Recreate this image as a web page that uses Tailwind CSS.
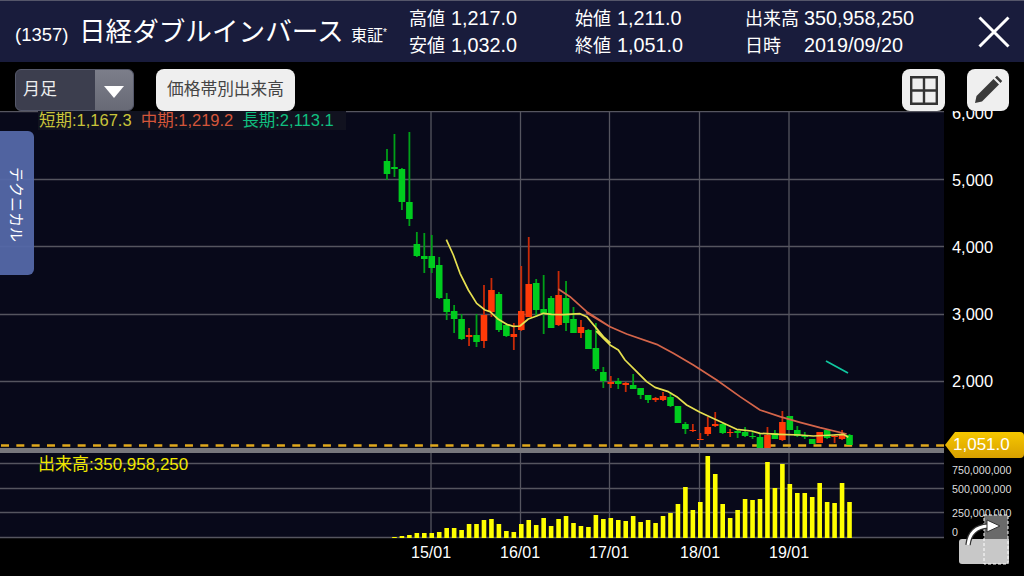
<!DOCTYPE html>
<html lang="ja">
<head>
  <meta charset="UTF-8" />
  <title>1357 chart</title>
  <script src="https://cdn.jsdelivr.net/npm/@tailwindcss/browser@4"></script>
</head>
<body class="w-[1024px] h-[576px] overflow-hidden bg-black text-white font-['Liberation_Sans','Noto_Sans_CJK_JP',sans-serif]">

  <!-- Header -->
  <header class="h-[62px] bg-[#191c3c] border-t border-[#55566a] flex items-center relative">
    <div class="w-[409px] flex items-baseline pl-[15px] pt-[2px] shrink-0">
      <span class="text-[18.5px] w-[64px] shrink-0">(1357)</span>
      <span class="text-[26.6px] w-[272px] shrink-0 whitespace-nowrap">日経ダブルインバース</span>
      <span class="text-[16px] whitespace-nowrap">東証<sup class="text-[10px]">*</sup></span>
    </div>
    <div class="w-[166px] shrink-0 text-[18px] leading-[26px] mt-[1px]">
      <div class="flex items-baseline gap-[6px]"><span>高値</span><span class="text-[19.8px]">1,217.0</span></div>
      <div class="flex items-baseline gap-[6px]"><span>安値</span><span class="text-[19.8px]">1,032.0</span></div>
    </div>
    <div class="w-[170px] shrink-0 text-[18px] leading-[26px] mt-[1px]">
      <div class="flex items-baseline gap-[6px]"><span>始値</span><span class="text-[19.8px]">1,211.0</span></div>
      <div class="flex items-baseline gap-[6px]"><span>終値</span><span class="text-[19.8px]">1,051.0</span></div>
    </div>
    <div class="w-[233px] shrink-0 text-[18px] leading-[26px] mt-[1px]">
      <div class="flex items-baseline"><span class="w-[59px]">出来高</span><span class="text-[19.8px]">350,958,250</span></div>
      <div class="flex items-baseline"><span class="w-[59px]">日時</span><span class="text-[19.8px]">2019/09/20</span></div>
    </div>
    <svg width="32" height="32" viewBox="0 0 32 32" class="shrink-0"><path d="M1.500 1.500L30.500 30.500M30.500 1.500L1.500 30.500" stroke="#fff" stroke-width="3" fill="none"/></svg>
  </header>

  <!-- Toolbar -->
  <div class="h-[49px] flex items-start pt-[7px] pl-[15px]">
    <div class="w-[119px] h-[42px] flex rounded-md border border-[#55586a] overflow-hidden bg-[#3c3e4e]">
      <span class="flex-1 pl-[7px] text-[17px] leading-[40px] text-[#eeeeee]">月足</span>
      <span class="w-[38px] flex items-center justify-center bg-gradient-to-b from-[#7c7e8a] to-[#686a76]">
        <svg width="20" height="12" viewBox="0 0 20 12" class="mt-[3px]"><path d="M0 0H20L10 12Z" fill="#fff"/></svg>
      </span>
    </div>
    <button class="ml-[22px] w-[139px] h-[42px] rounded-lg bg-[#efefef] text-[#444] text-[16.7px] whitespace-nowrap">価格帯別出来高</button>
    <button class="ml-[607px] w-[43px] h-[42px] rounded-lg bg-[#efefef] flex items-center justify-center">
      <svg width="28" height="29" viewBox="0 0 28 29"><path d="M1.200 1.200H26.800V27.800H1.200ZM14 1.200V27.800M1.200 14.500H26.800" fill="none" stroke="#333" stroke-width="2.400"/></svg>
    </button>
    <button class="ml-[22px] w-[42px] h-[42px] rounded-lg bg-[#efefef] flex items-center justify-center">
      <svg width="30" height="30" viewBox="0 0 30 30"><path d="M2 28L3.500 21L20.500 4L26 9.500L9 26.500ZM22 2.500L24 0.800L29.200 6L27.500 8Z" fill="#3a3a3a"/></svg>
    </button>
  </div>

  <!-- Chart -->
  <main class="relative h-[465px] overflow-hidden">
    <svg id="chart" width="1024" height="465" viewBox="0 111 1024 465" class="block"></svg>

    <div class="absolute left-[38px] top-0 w-[308px] h-[19px] bg-[#11121f] flex gap-[9px] pl-[1px] text-[16.5px] leading-[19px] whitespace-nowrap">
      <span class="text-[#c9c43a]">短期:1,167.3</span>
      <span class="text-[#d4563a]">中期:1,219.2</span>
      <span class="text-[#10c080]">長期:2,113.1</span>
    </div>

    <div class="absolute left-0 top-[20px] w-[34px] h-[144px] rounded-r-md bg-[#5468a8]/95 flex justify-start pt-[36px] pr-[3px] text-[15px] [writing-mode:vertical-rl] [text-orientation:sideways] items-center">テクニカル</div>

    <!-- price axis -->
    <span class="absolute left-[952px] top-[-8px] text-[16.4px] leading-[20px]">6,000</span>
    <span class="absolute left-[952px] top-[59px] text-[16.4px] leading-[20px]">5,000</span>
    <span class="absolute left-[952px] top-[126px] text-[16.4px] leading-[20px]">4,000</span>
    <span class="absolute left-[952px] top-[193px] text-[16.4px] leading-[20px]">3,000</span>
    <span class="absolute left-[952px] top-[260px] text-[16.4px] leading-[20px]">2,000</span>

    <div class="absolute left-[945px] top-[321px] w-[79px] h-[26px] bg-gradient-to-b from-[#f6c800] to-[#d8a000] rounded-r-sm [clip-path:polygon(0_50%,10px_0,100%_0,100%_100%,10px_100%)] pl-[8px] text-[17px] leading-[26px]">1,051.0</div>

    <!-- volume -->
    <span class="absolute left-[38px] top-[344px] text-[17px] leading-[20px] text-[#f0e800]">出来高:350,958,250</span>
    <span class="absolute left-[952px] top-[352px] text-[10.7px] leading-[14px] text-[#dddddd]">750,000,000</span>
    <span class="absolute left-[952px] top-[371px] text-[10.7px] leading-[14px] text-[#dddddd]">500,000,000</span>
    <span class="absolute left-[952px] top-[395px] text-[10.7px] leading-[14px] text-[#dddddd]">250,000,000</span>
    <span class="absolute left-[952px] top-[414px] text-[10.7px] leading-[14px] text-[#dddddd]">0</span>

    <!-- time axis -->
    <span class="absolute left-[411px] top-[432px] text-[16px] leading-[20px]">15/01</span>
    <span class="absolute left-[500px] top-[432px] text-[16px] leading-[20px]">16/01</span>
    <span class="absolute left-[589px] top-[432px] text-[16px] leading-[20px]">17/01</span>
    <span class="absolute left-[680px] top-[432px] text-[16px] leading-[20px]">18/01</span>
    <span class="absolute left-[769px] top-[432px] text-[16px] leading-[20px]">19/01</span>

    <!-- rotate button -->
    <svg class="absolute left-[955px] top-[400px]" width="60" height="56" viewBox="955 511 60 56">
      <path d="M984 515H1008V540H984Z" fill="#6a6a6a"/>
      <path d="M962 539H1009V561Q1009 564 1006 564H962Q959 564 959 561V542Q959 539 962 539Z" fill="#c8c8c8"/>
      <path d="M984 515H1008V564H984Z" fill="none" stroke="#fff" stroke-width="1" stroke-dasharray="3 2"/>
      <path d="M968 545Q970 527 988 526" fill="none" stroke="#333" stroke-width="5.500"/>
      <path d="M968 545Q970 527 988 526" fill="none" stroke="#fff" stroke-width="3"/>
      <path d="M987 520L1000 526L987 532Z" fill="#fff" stroke="#333" stroke-width="1"/>
    </svg>
  </main>

  <script>
    // [wickTop, wickBottom, bodyTop, bodyBottom, up?]
    const candles = [
      [149,180,161,174,0],[134,177,167,169,0],[168,210,169,202,0],[132,226,202,219,0],[232,257,244,256,0],
      [233,273,256,259,0],[235,273,256,268,0],[257,299,265,298,0],[293,320,299,312,0],[305,333,311,319,0],
      [314,340,319,339,0],[328,346,335,337,1],[314,347,335,342,0],[285,348,315,341,1],[278,317,290,312,1],
      [292,332,294,330,0],[323,337,325,336,0],[323,350,334,337,1],[266,331,311,330,1],[237,317,284,317,1],
      [279,317,283,310,0],[275,334,309,313,0],[296,328,298,328,0],[271,326,295,325,1],[281,331,298,323,0],
      [307,333,319,333,0],[320,338,327,333,1],[329,349,330,349,0],[323,371,348,369,0],[367,388,372,381,0],
      [376,388,382,384,1],[378,389,381,384,0],[382,392,383,385,1],[374,389,385,389,0],[388,399,388,395,0],
      [395,403,395,400,0],[397,402,398,400,1],[392,401,396,400,1],[392,407,397,406,0],[406,423,406,423,0],
      [422,434,424,429,0],[424,432,430,431,1],[433,440,439,440,1],[417,436,427,434,1],[412,427,424,426,1],
      [423,434,424,433,0],[429,437,432,433,1],[429,438,431,433,0],[427,437,432,436,0],[432,439,436,437,0],
      [433,448,437,448,0],[427,448,435,448,1],[430,439,433,439,0],[411,441,422,440,1],[416,430,416,430,0],
      [426,437,430,436,0],[432,439,435,437,0],[439,444,439,444,0],[432,443,432,443,1],[430,439,430,438,0],
      [435,443,436,437,1],[430,440,435,439,1],[434,445,435,445,0]
    ];
    const volumeTops = [538,537,536,535,533,533,533,532,528,528,530,524,524,520,519,524,531,532,524,520,525,518,526,519,516,523,526,527,515,519,518,520,
      521,516,522,520,523,516,513,504,487,510,502,456,474,504,518,510,499,500,499,462,488,464,484,493,493,497,483,502,503,483,502];

    const yellow = [[229,359],[250,405],[270,460],[295,510],[320,550],[345,570],[360,575],[385,598],[410,613],[430,619],[450,618],[475,597],[500,588],[520,580],[545,583],[580,584],[630,581],[650,590],[675,620],[700,650],[720,668]]
      .map(([x, y]) => [370 + x / 3, 120 + y / 3])
      .concat([[110,95],[150,135],[175,150],[195,180],[230,215],[260,245],[285,262],[325,275],[350,290],[380,315],[420,337],[470,360],[530,388],[575,393],[600,400],[660,403],[720,405],[760,408],[820,405],[850,403],[865,412]]
      .map(([x, y]) => [560 + x / 3, 300 + y / 3]));
    const red = [[565,507],[600,530],[650,575],[720,620]]
      .map(([x, y]) => [370 + x / 3, 120 + y / 3])
      .concat([[80,38],[150,80],[200,102],[290,133],[340,160],[400,195],[470,240],[540,290],[600,330],[660,350],[720,367],[780,383],[860,402]]
      .map(([x, y]) => [560 + x / 3, 300 + y / 3]));

    const cx = (i) => 387 + 7.46 * i;
    let s = '<rect x="0" y="111" width="944" height="427" fill="#08091a"/>';

    // grid
    [111, 179, 246, 314, 381, 463, 488, 512, 537].forEach((y) => {
      s += `<path d="M0 ${y}.5H944" stroke="#55555f" stroke-width="1.300"/>`;
    });
    [431, 520.5, 609.5, 699.5, 789].forEach((x) => {
      s += `<path d="M${x} 111V538" stroke="#55555f" stroke-width="1.300"/>`;
    });
    s += '<rect x="0" y="448" width="944" height="5" fill="#77777c"/>';
    s += '<path d="M1 445.500H944" stroke="#e0a81c" stroke-width="2.400" stroke-dasharray="8 7.330"/>';

    // candles
    candles.forEach((c, i) => {
      const x = cx(i);
      const body = c[4] ? "#ff3a08" : "#00cc1e";
      const wick = c[4] ? "#c82a08" : "#00a018";
      s += `<path d="M${x} ${c[0]}V${c[1]}" stroke="${wick}" stroke-width="1.800"/>`;
      s += `<rect x="${x - 3.3}" y="${c[2]}" width="6.600" height="${c[3] - c[2]}" fill="${body}"/>`;
    });

    // moving averages
    const line = (pts, color) => `<polyline points="${pts.map((p) => p.join(",")).join(" ")}" fill="none" stroke="${color}" stroke-width="1.700" stroke-linejoin="round"/>`;
    s += line(red, "#d4654a");
    s += line(yellow, "#e6e050");
    s += line([[826, 361], [848, 373]], "#10c8a0");

    // volume bars
    volumeTops.forEach((top, i) => {
      if (top < 538) s += `<rect x="${cx(i) - 2.3}" y="${top}" width="4.600" height="${538 - top}" fill="#ffff00"/>`;
    });

    document.getElementById("chart").innerHTML = s;
  </script>
</body>
</html>
